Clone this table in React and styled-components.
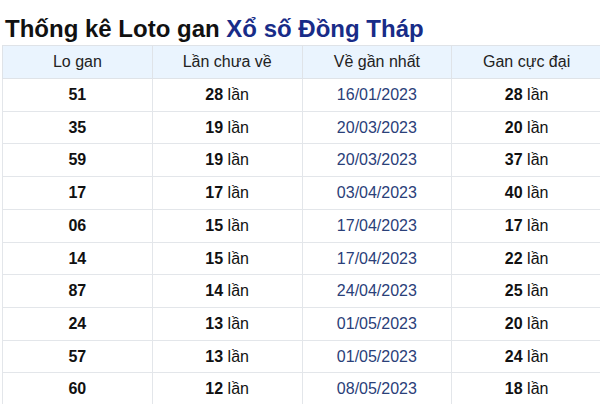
import React from 'react';
import styled, { createGlobalStyle } from 'styled-components';

const rows = [
  ['51', '28', '16/01/2023', '28'],
  ['35', '19', '20/03/2023', '20'],
  ['59', '19', '20/03/2023', '37'],
  ['17', '17', '03/04/2023', '40'],
  ['06', '15', '17/04/2023', '17'],
  ['14', '15', '17/04/2023', '22'],
  ['87', '14', '24/04/2023', '25'],
  ['24', '13', '01/05/2023', '20'],
  ['57', '13', '01/05/2023', '24'],
  ['60', '12', '08/05/2023', '18'],
];

const GlobalStyle = createGlobalStyle`
  html, body {
    margin: 0;
    padding: 0;
    overflow: hidden;
    background: #fff;
    font-family: "Liberation Sans", Arial, sans-serif;
    color: #000;
  }
`;

const Page = styled.div`
  padding: 0 0 0 2px;
  width: 600px;
`;

const Title = styled.h2`
  margin: 15px 0 2px 3px;
  font-size: 24px;
  line-height: 28px;
  font-weight: 700;
  color: #111;
  white-space: nowrap;

  span {
    color: #182c88;
  }
`;

const Table = styled.table`
  width: 600px;
  border-collapse: collapse;
  table-layout: fixed;
  font-size: 16px;
`;

const Th = styled.th`
  background: #eaf4fe;
  font-weight: 400;
  color: #222;
  border: 1px solid #dfe3e8;
  padding: 5px 4px;
  line-height: 22px;
  text-align: center;
`;

const Td = styled.td`
  border: 1px solid #e3e6ea;
  padding: 5px 4px;
  line-height: 21.7px;
  text-align: center;
  color: ${(p) => (p.$date ? '#2a4079' : '#111')};
  font-weight: ${(p) => (p.$bold ? 700 : 400)};

  b {
    font-weight: 700;
  }
`;

const Times = ({ n }) => (
  <>
    <b>{n}</b> lần
  </>
);

export default function App() {
  return (
    <Page>
      <GlobalStyle />
      <Title>
        Thống kê Loto gan <span>Xổ số Đồng Tháp</span>
      </Title>
      <Table>
        <thead>
          <tr>
            <Th>Lo gan</Th>
            <Th>Lần chưa về</Th>
            <Th>Về gần nhất</Th>
            <Th>Gan cực đại</Th>
          </tr>
        </thead>
        <tbody>
          {rows.map(([lo, miss, date, max]) => (
            <tr key={lo}>
              <Td $bold>{lo}</Td>
              <Td>
                <Times n={miss} />
              </Td>
              <Td $date>{date}</Td>
              <Td>
                <Times n={max} />
              </Td>
            </tr>
          ))}
        </tbody>
      </Table>
    </Page>
  );
}
